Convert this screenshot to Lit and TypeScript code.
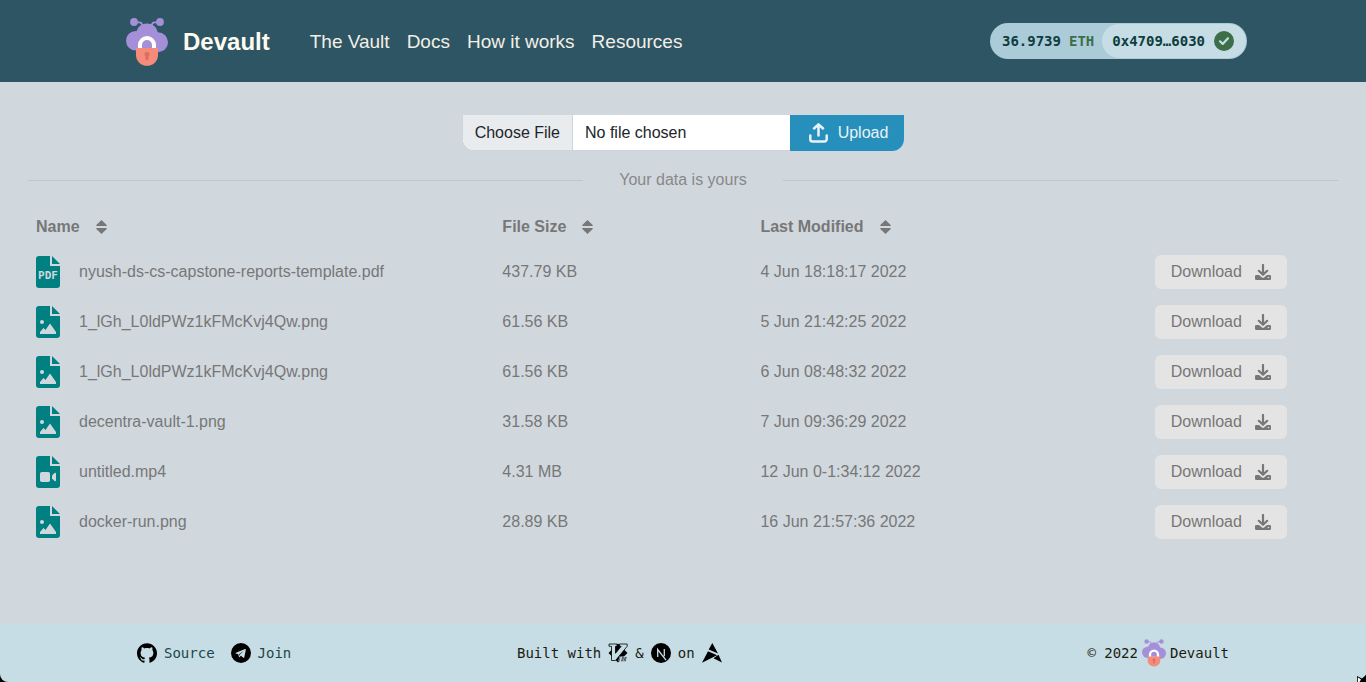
import { LitElement, html, css, svg } from "lit";
import { customElement, property, state } from "lit/decorators.js";

type Kind = "pdf" | "image" | "video";

interface VaultFile {
  name: string;
  kind: Kind;
  size: string;
  modified: string;
}

const FILES: VaultFile[] = [
  { name: "nyush-ds-cs-capstone-reports-template.pdf", kind: "pdf", size: "437.79 KB", modified: "4 Jun 18:18:17 2022" },
  { name: "1_lGh_L0ldPWz1kFMcKvj4Qw.png", kind: "image", size: "61.56 KB", modified: "5 Jun 21:42:25 2022" },
  { name: "1_lGh_L0ldPWz1kFMcKvj4Qw.png", kind: "image", size: "61.56 KB", modified: "6 Jun 08:48:32 2022" },
  { name: "decentra-vault-1.png", kind: "image", size: "31.58 KB", modified: "7 Jun 09:36:29 2022" },
  { name: "untitled.mp4", kind: "video", size: "4.31 MB", modified: "12 Jun 0-1:34:12 2022" },
  { name: "docker-run.png", kind: "image", size: "28.89 KB", modified: "16 Jun 21:57:36 2022" },
];

@customElement("devault-logo")
class DevaultLogo extends LitElement {
  static styles = css`
    :host { display: block; }
    .art { display: block; width: 100%; height: 100%; }
  `;
  render() {
    return html`<svg class="art" viewBox="0 0 42 48" aria-hidden="true">
      <g fill="#a58fd8">
        <circle cx="8" cy="4" r="3.9" /><circle cx="34" cy="4" r="3.9" />
        <circle cx="9.8" cy="22.8" r="9.8" /><circle cx="32" cy="24.3" r="10" />
        <path d="M10 16C11 9 15 5.500 21 5.500S31 9 32 16L34 30H8z" />
        <path d="M10 4.300h3.500q2.500 0 3 3.500M32 4.300h-3.500q-2.500 0-3 3.500" fill="none" stroke="#a58fd8" stroke-width="1.700" />
      </g>
      <path d="M14 31v-4a7 7 0 0 1 14 0v4" fill="none" stroke="#fff" stroke-width="4" />
      <path d="M10 30h22v7a11 10.800 0 0 1-22 0z" fill="#f58c7b" />
      <path d="M21 33.700a2.600 2.600 0 0 1 1.500 4.700V41a1.500 1.500 0 0 1-3 0v-2.600a2.600 2.600 0 0 1 1.500-4.700z" fill="#d96f63" />
    </svg>`;
  }
}

@customElement("file-icon")
class FileIcon extends LitElement {
  @property() kind: Kind = "image";
  static styles = css`
    :host { display: block; flex: none; width: 24px; height: 32px; }
    .art { display: block; width: 24px; height: 32px; }
    .page { fill: #008080; }
    .mark { fill: #d0d8de; }
    .label { fill: #d0d8de; font: bold 11px "DejaVu Sans Mono", monospace; }
  `;
  render() {
    const marks = {
      pdf: svg`<text class="label" x="12" y="23" text-anchor="middle">PDF</text>`,
      image: svg`<circle class="mark" cx="6" cy="16" r="2" /><path class="mark" d="M4 28v-2l3.500-4 2 2 4.500-6.500 6 8.500v2z" />`,
      video: svg`<rect class="mark" x="4" y="16" width="10" height="10" rx="1.800" /><path class="mark" d="M16 19.500l2.500-2.500q1.500-.8 1.500.8v6.400q0 1.600-1.500.8L16 22.500z" />`,
    };
    return html`<svg class="art" viewBox="0 0 24 32" aria-hidden="true">
      <path class="page" d="M3 0H14V10H24V29a3 3 0 0 1-3 3H3a3 3 0 0 1-3-3V3a3 3 0 0 1 3-3zM16 0l8 8h-8z" />
      ${marks[this.kind]}
    </svg>`;
  }
}

@customElement("app-root")
class AppRoot extends LitElement {
  @state() private files = FILES;

  static styles = css`
    :host {
      display: flex;
      flex-direction: column;
      min-height: 100vh;
      position: relative;
      background: #000;
      color: #777;
      font: 16px/24px "Liberation Sans", Arial, sans-serif;
    }
    *, *::before, *::after { box-sizing: border-box; }
    button, input { font: inherit; }
    a { color: inherit; text-decoration: none; }

    .top { background: #2d5563; }
    .bar {
      display: flex;
      align-items: center;
      max-width: 1140px;
      min-height: 82px;
      margin: 0 auto;
      padding: 0 6px 0 12px;
    }
    .brand {
      display: flex;
      align-items: center;
      gap: 14px;
      margin-right: 40px;
      padding-top: 2px;
      color: #fffbf0;
      font-size: 24px;
      font-weight: bold;
    }
    .brand-logo { width: 44px; height: 48px; }
    .links { display: flex; gap: 17px; padding-top: 2px; color: #f3efe6; font-size: 19px; }
    .wallet {
      display: flex;
      align-items: center;
      margin-left: auto;
      padding: 1px 1px 1px 12px;
      border-radius: 18px;
      background: #abcbd9;
      color: #0f3d3e;
      font: bold 14px/20px "DejaVu Sans Mono", "Liberation Mono", monospace;
    }
    .unit { margin: 0 8px; color: #3c6e47; }
    .account {
      display: flex;
      align-items: center;
      gap: 9px;
      padding: 7px 12px 7px 10px;
      border: 0;
      border-radius: 17px;
      background: #c6dde5;
      color: inherit;
    }
    .check { display: block; width: 20px; height: 20px; }

    .content { flex: 1; padding: 33px 28px 0; background: #d0d8de; }
    .uploader { display: flex; justify-content: center; }
    .picker {
      width: 328px;
      height: 36px;
      padding: 6px 12px 5px;
      overflow: hidden;
      border: 1px solid #ced4da;
      border-width: 0 0 1px 1px;
      border-radius: 0 0 0 12px;
      background: #fff;
      color: #212529;
    }
    .picker::file-selector-button {
      margin: -6px 12px -6px -12px;
      padding: 6px 12px;
      border: 0 solid #ced4da;
      border-right-width: 1px;
      background: #e9ecef;
      color: #212529;
      font: inherit;
    }
    .upload {
      display: flex;
      align-items: center;
      gap: 10px;
      padding: 0 16px 0 18px;
      border: 0;
      border-radius: 0 0 12px 0;
      background: #268fbb;
      color: #e9f2f6;
    }
    .upload-icon { width: 20px; height: 20px; }
    .divider { display: flex; align-items: center; margin-top: 17px; color: #888; }
    .divider::before, .divider::after { content: ""; flex: 1; height: 1px; background: #bfc6c9; }
    .motto { width: 200px; text-align: center; }

    .files { width: 100%; margin-top: 15px; border-collapse: collapse; table-layout: fixed; }
    .files th, .files td { padding: 8px; text-align: left; }
    .col-name { width: 35.6%; }
    .col-size { width: 19.7%; }
    .col-date { width: 30.1%; }
    .sort {
      display: flex;
      align-items: center;
      gap: 16px;
      padding: 0;
      border: 0;
      background: none;
      color: inherit;
      font-weight: bold;
    }
    .sort-icon { width: 11px; height: 14px; }
    .entry { display: flex; align-items: center; gap: 19px; }
    .download {
      display: flex;
      align-items: center;
      gap: 13px;
      padding: 5px 16px;
      border: 0;
      border-radius: 6px;
      background: #e4e4e4;
      color: #777;
    }
    .download-icon { width: 16px; height: 16px; }

    .bottom {
      border-radius: 0 0 8px 8px;
      background: #c6dde5;
      color: #1c1c10;
      font: 14px/20px "DejaVu Sans Mono", "Liberation Mono", monospace;
    }
    .foot {
      display: grid;
      grid-template-columns: repeat(3, 1fr);
      align-items: center;
      max-width: 1140px;
      min-height: 58px;
      margin: 0 auto;
    }
    .group { display: flex; align-items: center; gap: 7px; padding: 0 24px; }
    .social { gap: 16px; color: #1a4747; }
    .social a { display: flex; gap: 7px; }
    .legal { justify-content: flex-end; gap: 4px; }
    .glyph { display: block; width: 20px; height: 20px; fill: #000; }
    .foot-logo { width: 24px; height: 28px; }
    .pointer { position: absolute; right: 0; bottom: 0; width: 10px; height: 7px; }
  `;

  private heading(label: string) {
    return html`<button class="sort">${label}
      <svg class="sort-icon" viewBox="0 0 11 14" fill="currentColor" aria-hidden="true">
        <path d="M5.500 0L10.700 5q.5 1-.5 1H.8q-1 0-.5-1zM5.500 14L.3 9q-.5-1 .5-1h9.400q1 0 .5 1z" />
      </svg></button>`;
  }

  render() {
    return html`
      <header class="top">
        <div class="bar">
          <a class="brand" href="#"><devault-logo class="brand-logo"></devault-logo>Devault</a>
          <nav class="links">
            <a href="#vault">The Vault</a><a href="#docs">Docs</a><a href="#how">How it works</a><a href="#resources">Resources</a>
          </nav>
          <div class="wallet">
            <span>36.9739</span><span class="unit">ETH</span>
            <button class="account">0x4709…6030
              <svg class="check" viewBox="0 0 20 20" aria-hidden="true">
                <circle cx="10" cy="10" r="10" fill="#3c6e47" />
                <path d="M6 10.300l2.700 2.600 5.300-5.600" fill="none" stroke="#c6dde5" stroke-width="2.200" stroke-linecap="round" stroke-linejoin="round" />
              </svg>
            </button>
          </div>
        </div>
      </header>

      <main class="content">
        <form class="uploader">
          <input class="picker" type="file" aria-label="File to upload" />
          <button class="upload" type="button">
            <svg class="upload-icon" viewBox="0 0 20 20" fill="none" stroke="currentColor" stroke-width="2.500" stroke-linecap="round" stroke-linejoin="round" aria-hidden="true">
              <path d="M10.500 12.500V1.500M6 5.500L10.500 1.300 15 5.500M2.300 12.500v3.800a2.300 2.300 0 0 0 2.300 2.300h11.800a2.300 2.300 0 0 0 2.300-2.300v-3.800" />
            </svg>Upload
          </button>
        </form>
        <div class="divider"><span class="motto">Your data is yours</span></div>
        <table class="files">
          <thead>
            <tr>
              <th class="col-name">${this.heading("Name")}</th>
              <th class="col-size">${this.heading("File Size")}</th>
              <th class="col-date">${this.heading("Last Modified")}</th>
              <th></th>
            </tr>
          </thead>
          <tbody>
            ${this.files.map(
              (f) => html`<tr>
                <td><div class="entry"><file-icon .kind=${f.kind}></file-icon>${f.name}</div></td>
                <td>${f.size}</td>
                <td>${f.modified}</td>
                <td>
                  <button class="download">Download
                    <svg class="download-icon" viewBox="0 0 16 16" fill="currentColor" aria-hidden="true">
                      <path d="M8 1v9M3.800 6.800L8 10.800l4.200-4" fill="none" stroke="currentColor" stroke-width="2.200" stroke-linecap="round" stroke-linejoin="round" />
                      <path d="M1.300 11H4l3 2.600q1 .8 2 0l3-2.600h2.700A1.300 1.300 0 0 1 16 12.300v2.400a1.300 1.300 0 0 1-1.300 1.300H1.300A1.300 1.300 0 0 1 0 14.700v-2.400A1.300 1.300 0 0 1 1.300 11z" />
                      <circle cx="13.500" cy="13.500" r=".8" fill="#e4e4e4" />
                    </svg>
                  </button>
                </td>
              </tr>`
            )}
          </tbody>
        </table>
      </main>

      <footer class="bottom">
        <div class="foot">
          <div class="group social">
            <a href="#source">
              <svg class="glyph" viewBox="0 0 24 24" aria-hidden="true"><path d="M12 .297c-6.630 0-12 5.373-12 12 0 5.303 3.438 9.800 8.205 11.385.6.113.82-.258.82-.577 0-.285-.01-1.040-.015-2.040-3.338.724-4.042-1.610-4.042-1.610C4.422 18.070 3.633 17.700 3.633 17.700c-1.087-.744.084-.729.084-.729 1.205.084 1.838 1.236 1.838 1.236 1.070 1.835 2.809 1.305 3.495.998.108-.776.417-1.305.76-1.605-2.665-.3-5.466-1.332-5.466-5.930 0-1.310.465-2.380 1.235-3.220-.135-.303-.54-1.523.105-3.176 0 0 1.005-.322 3.300 1.230.96-.267 1.980-.399 3-.405 1.020.006 2.040.138 3 .405 2.280-1.552 3.285-1.230 3.285-1.230.645 1.653.24 2.873.12 3.176.765.84 1.230 1.910 1.230 3.220 0 4.610-2.805 5.625-5.475 5.920.42.36.81 1.096.81 2.220 0 1.606-.015 2.896-.015 3.286 0 .315.21.69.825.57C20.565 22.092 24 17.592 24 12.297c0-6.627-5.373-12-12-12" /></svg>Source</a>
            <a href="#join">
              <svg class="glyph" viewBox="0 0 24 24" aria-hidden="true"><circle cx="12" cy="12" r="12" /><path fill="#c6dde5" d="M17.300 7.200c.2 0 .6.200.5.900l-1.800 9c-.2.700-.6.800-1.200.5l-2.900-2.200-1.600 1.500c-.3.300-.6.300-.7-.2l-.9-3.100-2.900-.9c-.6-.3-.6-.6.1-1l10.900-4.400q.3-.1.500-.1zM9.700 13.600l.4 2 .6-1.900 4.700-4.400z" /></svg>Join</a>
          </div>
          <div class="group">
            <span>Built with</span>
            <svg class="glyph" viewBox="0 0 20 20" aria-hidden="true">
              <path d="M10 .5l9.500 9.500-9.500 9.500L.5 10z" />
              <path d="M1 1h8v2.300H7.500v7l5.700-7H11.500V1h7.700v2.300L7.500 17.500H3.500V3.300H1z" fill="#c6dde5" stroke="#000" stroke-width=".8" />
              <path d="M11.500 13.500h7l-1.300 4.800h-7z" fill="#c6dde5" />
              <path d="M12.300 12.500v.9M12 14.300l-1 4M13.500 18.300l1-4h1l-1 4M16 18.300l1-4h1.200l-1 4" fill="none" stroke="#000" stroke-width=".6" />
            </svg>
            <span>&amp;</span>
            <svg class="glyph" viewBox="0 0 20 20" aria-hidden="true">
              <circle cx="10" cy="10" r="10" />
              <path d="M6.700 14V6.500L15 17.200M13.300 6v7.300" fill="none" stroke="#c6dde5" stroke-width="1.300" />
            </svg>
            <span>on</span>
            <svg class="glyph" viewBox="0 0 20 20" aria-hidden="true">
              <path d="M10.300 0L16 10.500 6.700 6.600zM6 8.200L15 12.300 0 19.800zM16.500 11.800L20 19.500 11.500 15.200z" />
            </svg>
          </div>
          <div class="group legal"><span>© 2022</span><devault-logo class="foot-logo"></devault-logo><span>Devault</span></div>
        </div>
      </footer>
      <svg class="pointer" viewBox="0 0 10 7" aria-hidden="true">
        <path d="M1 1l5 2.500L10 0v7H1z" fill="#000" /><path d="M1.800 2.300L5 4.500 3.500 7H1.800z" fill="#fff" />
      </svg>
    `;
  }
}
